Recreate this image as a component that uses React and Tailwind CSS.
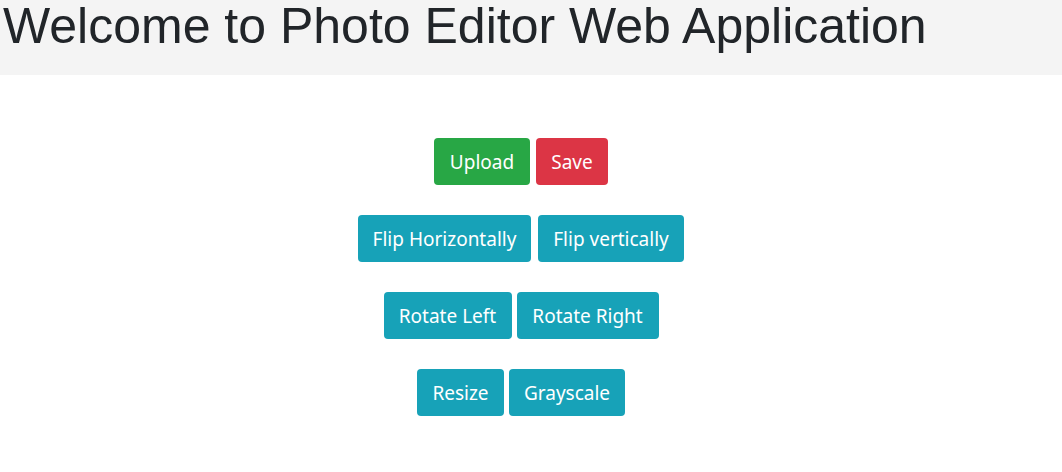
const btn =
  "h-[47px] rounded-[4px] text-white text-[19px] leading-none pt-[2px] flex items-center justify-center font-['Noto_Sans','Open_Sans',sans-serif]";

function Row({ gap, children }) {
  return <div className={`flex ${gap}`}>{children}</div>;
}

export default function App() {
  return (
    <div className="w-[1062px] h-[472px] bg-white overflow-hidden">
      <header className="h-[75px] bg-[#f4f4f4] flex items-start">
        <h1 className="text-[#212529] text-[50px] leading-[52px] pl-[3px] whitespace-nowrap font-['Liberation_Sans',Arial,sans-serif]">
          Welcome to Photo Editor Web Application
        </h1>
      </header>
      <main className="flex flex-col items-center gap-[30px] pt-[63px] pr-[20px]">
        <Row gap="gap-[6px]">
          <button className={`${btn} w-[96px] bg-[#28a745]`}>Upload</button>
          <button className={`${btn} w-[72px] bg-[#dc3545]`}>Save</button>
        </Row>
        <Row gap="gap-[7px]">
          <button className={`${btn} w-[173px] bg-[#17a2b8]`}>Flip Horizontally</button>
          <button className={`${btn} w-[146px] bg-[#17a2b8]`}>Flip vertically</button>
        </Row>
        <Row gap="gap-[5px]">
          <button className={`${btn} w-[128px] bg-[#17a2b8]`}>Rotate Left</button>
          <button className={`${btn} w-[142px] bg-[#17a2b8]`}>Rotate Right</button>
        </Row>
        <Row gap="gap-[5px]">
          <button className={`${btn} w-[87px] bg-[#17a2b8]`}>Resize</button>
          <button className={`${btn} w-[116px] bg-[#17a2b8]`}>Grayscale</button>
        </Row>
      </main>
    </div>
  );
}
